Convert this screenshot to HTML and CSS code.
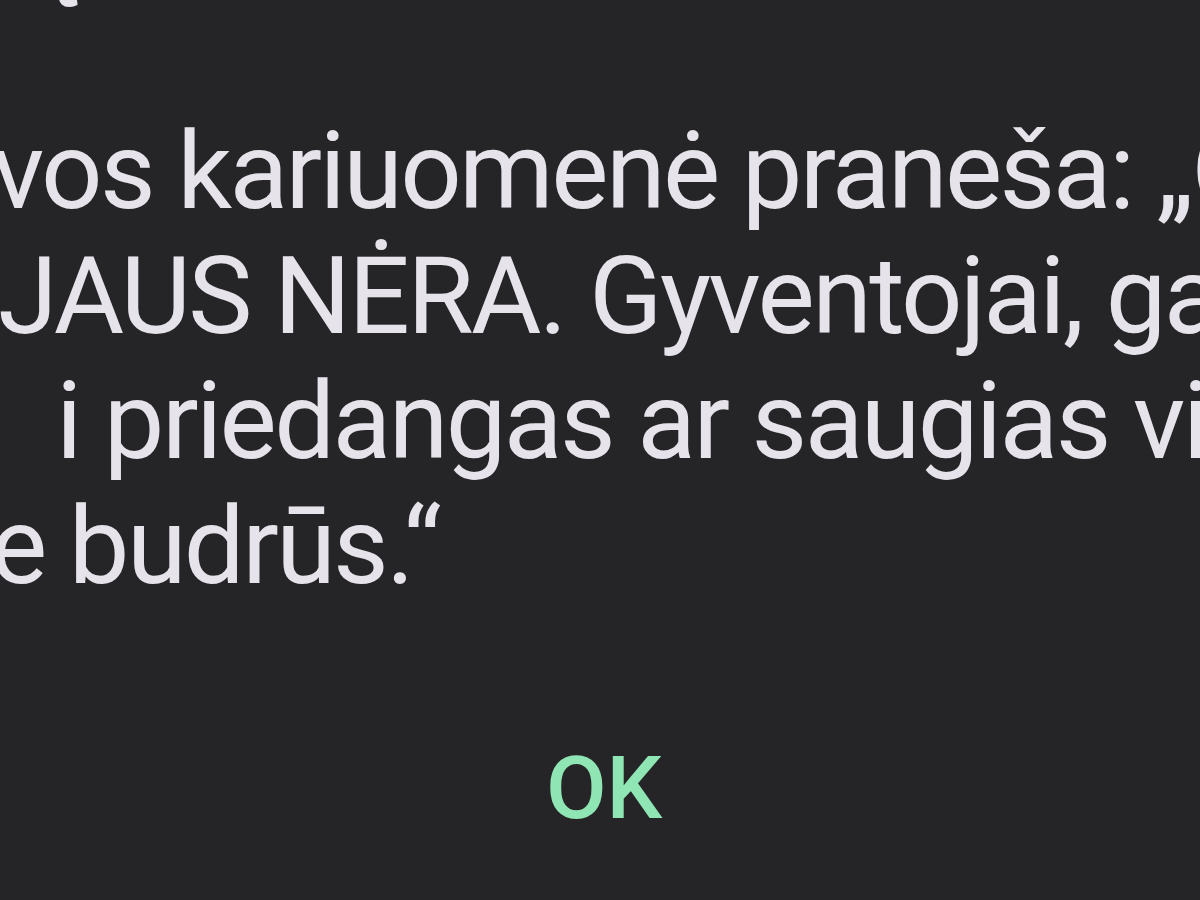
FILE: index.html
```html
<!DOCTYPE html>
<html lang="lt">
<head>
<meta charset="utf-8">
<title>Pranešimas</title>
<link rel="stylesheet" href="styles.css">
</head>
<body>
<div class="screen">
  <div class="dialog">
    <p class="prev"><span class="line p0">Ką turite atlikti dabar, o</span></p>
    <p class="msg">
      <span class="line l1">vos kariuomenė praneša: „O</span>
      <span class="line l2">JAUS NĖRA. Gyventojai, ga</span>
      <span class="line l3">i priedangas ar saugias vie</span>
      <span class="line l4">e budrūs.“</span>
    </p>
    <div class="actions"><button class="ok" type="button">OK</button></div>
  </div>
</div>
</body>
</html>
```
FILE: styles.css
```css
html, body {
  margin: 0;
  padding: 0;
  background: #252527;
  width: 1200px;
  height: 900px;
  overflow: hidden;
}
.screen {
  width: 1200px;
  height: 900px;
  overflow: hidden;
  font-family: Roboto, "Noto Sans", sans-serif;
  color: #e6e4ea;
}
.dialog {
  display: flex;
  flex-direction: column;
}
.prev, .msg {
  margin: 0;
  font-size: 108px;
  line-height: 124px;
  letter-spacing: -2.6px;
}
.prev {
  margin-top: -115px;
}
.msg {
  margin-top: 100px;
}
.msg .line + .line {
  margin-top: 1px;
}
.line {
  display: block;
  white-space: nowrap;
}
.p0 { margin-left: -40px; }
.l1 { margin-left: -8px; }
.l2 { margin-left: -2px; }
.l3 { margin-left: 56px; }
.l4 { margin-left: -10px; }
.actions {
  display: flex;
  justify-content: center;
  margin-top: 130px;
}
.ok {
  background: none;
  border: 0;
  padding: 0;
  font-family: Roboto, "Noto Sans", sans-serif;
  font-size: 88px;
  font-weight: 500;
  line-height: 100px;
  color: #8fe6b4;
  margin-left: 8px;
}
```
